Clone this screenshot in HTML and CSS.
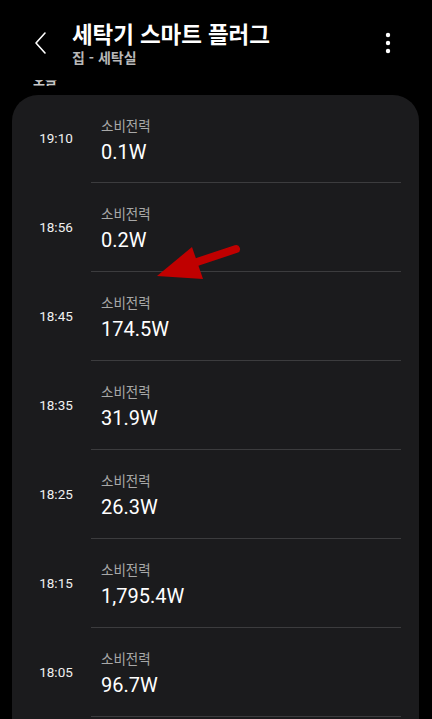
FILE: index.html
```html
<!DOCTYPE html>
<html lang="ko">
<head>
<meta charset="utf-8">
<link rel="stylesheet" href="styles.css">
</head>
<body>
<div class="screen">
  <header class="topbar">
    <svg class="back" width="16" height="24" viewBox="0 0 16 24"><path d="M11 2 L2 12 L11 22" fill="none" stroke="#fff" stroke-width="1.6" stroke-linecap="round" stroke-linejoin="round"/></svg>
    <div class="titles">
      <div class="title">세탁기 스마트 플러그</div>
      <div class="subtitle">집 - 세탁실</div>
    </div>
    <svg class="more" width="6" height="22" viewBox="0 0 6 22"><circle cx="3" cy="3" r="2.2" fill="#fff"/><circle cx="3" cy="11" r="2.2" fill="#fff"/><circle cx="3" cy="19" r="2.2" fill="#fff"/></svg>
  </header>
  <div class="peek"><div class="peek-clip"><span>오늘</span></div></div>
  <main class="card">
    <div class="row"><div class="time">19:10</div><div class="info"><div class="label">소비전력</div><div class="value">0.1W</div></div></div>
    <div class="row"><div class="time">18:56</div><div class="info"><div class="label">소비전력</div><div class="value">0.2W</div></div></div>
    <div class="row"><div class="time">18:45</div><div class="info"><div class="label">소비전력</div><div class="value">174.5W</div></div></div>
    <div class="row"><div class="time">18:35</div><div class="info"><div class="label">소비전력</div><div class="value">31.9W</div></div></div>
    <div class="row"><div class="time">18:25</div><div class="info"><div class="label">소비전력</div><div class="value">26.3W</div></div></div>
    <div class="row"><div class="time">18:15</div><div class="info"><div class="label">소비전력</div><div class="value">1,795.4W</div></div></div>
    <div class="row"><div class="time">18:05</div><div class="info"><div class="label">소비전력</div><div class="value">96.7W</div></div></div>
  </main>
  <svg class="arrow" width="432" height="719" viewBox="0 0 432 719">
    <line x1="236" y1="249" x2="185" y2="266" stroke="#c00000" stroke-width="8" stroke-linecap="round"/>
    <polygon points="157,276 192,247 203,279" fill="#c00000"/>
  </svg>
</div>
</body>
</html>
```
FILE: styles.css
```css
html, body {
  margin: 0;
  padding: 0;
  background: #000;
}
body {
  font-family: "Noto Sans CJK KR", "Noto Sans", sans-serif;
  color: #fff;
  width: 432px;
  height: 719px;
  overflow: hidden;
}
.screen {
  position: relative;
  width: 432px;
  height: 719px;
  overflow: hidden;
}
.topbar {
  height: 77px;
  display: flex;
  align-items: flex-start;
  box-sizing: border-box;
  padding: 20px 0 0 34px;
}
.back {
  margin-top: 11px;
  flex: none;
}
.titles {
  margin-left: 22px;
  flex: 1;
}
.title {
  font-size: 22.5px;
  font-weight: 700;
  line-height: 26px;
  letter-spacing: -0.1px;
}
.subtitle {
  font-size: 14px;
  font-weight: 700;
  color: #b8b8b8;
  line-height: 18px;
  margin-top: 2px;
}
.more {
  margin: 12px 41px 0 0;
  flex: none;
}
.peek {
  height: 9px;
  box-sizing: border-box;
  padding: 3px 0 0 33px;
}
.peek-clip {
  height: 6px;
  overflow: hidden;
}
.peek-clip span {
  display: block;
  margin-top: -9px;
  font-size: 13px;
  line-height: 18px;
  color: #c8c8c8;
  font-weight: 700;
}
.card {
  margin: 9px 13px 0 12px;
  background: #1b1b1d;
  border-radius: 26px 26px 0 0;
  height: 700px;
}
.row {
  display: flex;
  height: 89px;
}
.row:first-child {
  height: 88px;
}
.time {
  width: 79px;
  box-sizing: border-box;
  padding-left: 9px;
  display: flex;
  align-items: center;
  justify-content: center;
  font-family: "Roboto", "Noto Sans", sans-serif;
  font-size: 13.5px;
  color: #f0f0f0;
  padding-bottom: 2px;
}
.info {
  flex: 1;
  margin-right: 18px;
  border-bottom: 1px solid #3c3c3e;
  padding: 21px 0 0 10px;
}
.label {
  font-size: 13.5px;
  line-height: 18px;
  color: #a8a8a8;
}
.value {
  font-family: "Roboto", "Noto Sans", sans-serif;
  font-size: 20px;
  line-height: 24px;
  margin-top: 6px;
  color: #fff;
}
.arrow {
  position: absolute;
  left: 0;
  top: 0;
  pointer-events: none;
}
```
